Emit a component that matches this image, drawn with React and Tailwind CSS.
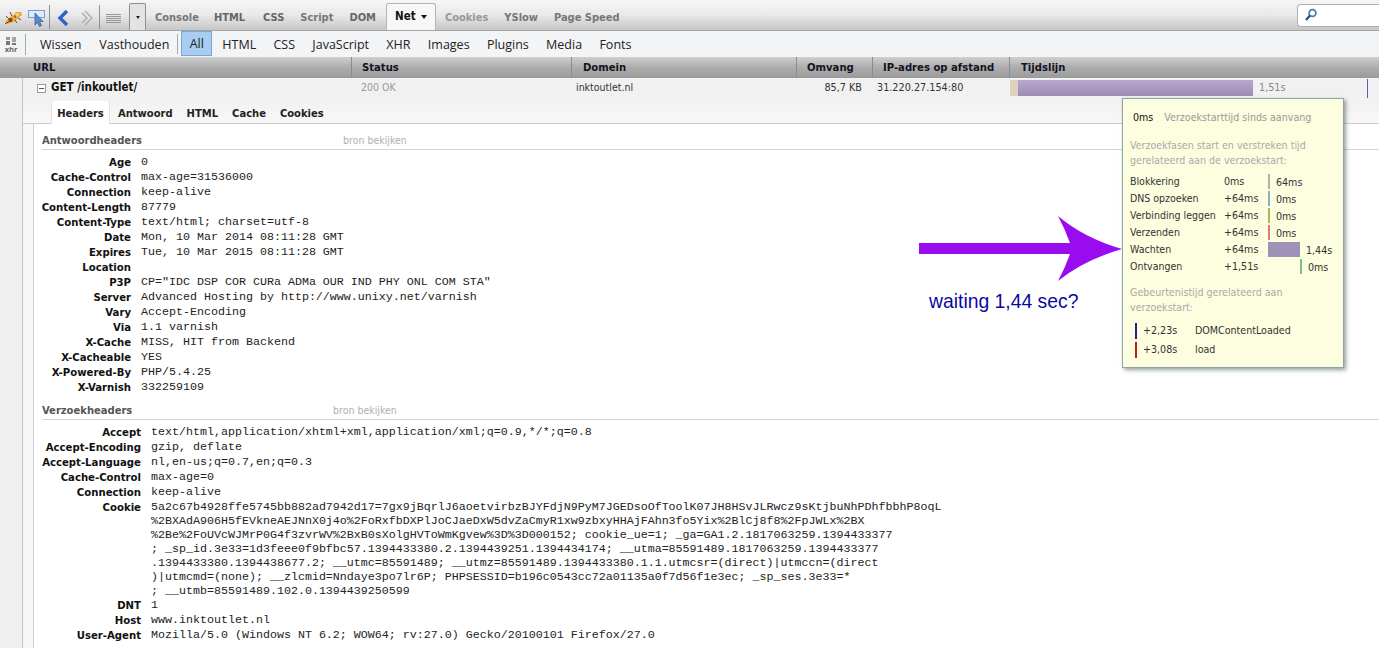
const ui = { fontFamily: '"DejaVu Sans Condensed","DejaVu Sans",sans-serif' };

function Bug() {
  return (
    <svg width="20" height="18" viewBox="0 0 20 18">
      <path d="M2 13 L6 9 L10 6 L13 3 L18 3 L19 6 L15 9 L12 12 L8 14 L4 15 Z" fill="#e9a63c" />
      <path d="M10 6 L14 4 L17 5 L14 8 L11 9 Z" fill="#f6cf78" />
      <path d="M2 15 L7 12 M6 10 L3 7 M9 7 L7 3 M12 11 L14 14 M15 9 L18 11" stroke="#6e4a1c" strokeWidth="1" fill="none" />
      <circle cx="7.5" cy="11" r="2" fill="#7b4316" />
      <circle cx="12" cy="7.5" r="1.3" fill="#a85a1a" />
    </svg>
  );
}

function Inspect() {
  return (
    <svg width="20" height="18" viewBox="0 0 20 18">
      <rect x="1.5" y="1.5" width="16" height="7" fill="#dfeafa" stroke="#7e9cc8" />
      <path d="M8 4 L8 16 L10.5 13.5 L12.5 17.5 L14.5 16.5 L12.5 12.5 L16 12.5 Z" fill="#5a8ad0" stroke="#3a5f9a" strokeWidth="0.8" />
    </svg>
  );
}

function Search() {
  return (
    <svg width="14" height="14" viewBox="0 0 14 14" fill="none">
      <circle cx="8.5" cy="5" r="3.4" stroke="#4d7fa8" strokeWidth="1.8" />
      <path d="M6 7.5 L2 12" stroke="#234f78" strokeWidth="2.2" />
    </svg>
  );
}

function Xhr() {
  return (
    <svg width="12" height="8" viewBox="0 0 12 8">
      <rect x="1" y="0" width="4" height="3" fill="#9a9a9a" />
      <rect x="1" y="4" width="4" height="4" fill="#777" />
      <rect x="7" y="0" width="4" height="5" fill="#a5a5a5" />
      <rect x="7" y="6" width="4" height="2" fill="#777" />
    </svg>
  );
}

const topTabs = [
  ['Console', 'ml-[9px] text-[#777]'],
  ['HTML', 'ml-[15px] text-[#666]'],
  ['CSS', 'ml-[18px] text-[#666]'],
  ['Script', 'ml-[16px] text-[#777]'],
  ['DOM', 'ml-[16px] text-[#666]'],
];

function TopBar() {
  return (
    <div className="flex h-[31px] items-center border-b border-[#a5a5a5] bg-gradient-to-b from-[#f6f6f6] via-[#e9e9e9] to-[#c6c6c6] pt-[6px]" style={ui}>
      <div className="ml-[3px] flex w-[20px] justify-center"><Bug /></div>
      <div className="ml-[4px] flex w-[20px] justify-center"><Inspect /></div>
      <div className="ml-[2px] h-[24px] w-px -translate-y-px bg-[#8f8f8f]" />
      <svg width="14" height="16" viewBox="0 0 14 16" className="ml-[7px]"><path d="M10 1 L3 8 L10 15" fill="none" stroke="#2a62c8" strokeWidth="3.4" /></svg>
      <svg width="14" height="16" viewBox="0 0 14 16" className="ml-[9px]"><path d="M5 1 L12 8 L5 15 M2 3 L7 8 L2 13" fill="none" stroke="#a8a8a8" strokeWidth="1.2" /></svg>
      <div className="ml-[5px] h-[24px] w-px -translate-y-px bg-[#8f8f8f]" />
      <div className="ml-[6px] flex w-[15px] flex-col gap-[1px]">
        <div className="h-px bg-[#999]" /><div className="h-px bg-[#999]" /><div className="h-px bg-[#999]" /><div className="h-px bg-[#999]" /><div className="h-px bg-[#999]" />
      </div>
      <div className="ml-[8px] flex h-[27px] w-[17px] items-center justify-center self-end rounded-t-[2px] border border-b-0 border-[#8f8f8f] bg-[#e3e3e3]">
        <div className="h-0 w-0 border-x-[2px] border-t-[3px] border-x-transparent border-t-[#222]" />
      </div>
      {topTabs.map(([t, c]) => (
        <span key={t} className={`text-[11px] font-bold ${c}`}>{t}</span>
      ))}
      <div className="ml-[10px] flex h-[27px] w-[50px] items-center justify-center gap-[5px] self-end rounded-t-[3px] border border-b-0 border-[#b5b5b5] bg-[#f7f7f7] text-[11.5px] font-bold text-[#111]">
        Net
        <div className="h-0 w-0 border-x-[3.5px] border-t-[4px] border-x-transparent border-t-[#111]" />
      </div>
      <span className="ml-[9px] text-[11px] font-bold text-[#999]">Cookies</span>
      <span className="ml-[16px] text-[11px] font-bold text-[#777]">YSlow</span>
      <span className="ml-[16px] text-[11px] font-bold text-[#777]">Page Speed</span>
      <div className="ml-auto flex h-[23px] w-[82px] -translate-y-[3px] items-center rounded-l-[4px] border border-r-0 border-[#a9b1b9] bg-white pl-[6px]">
        <Search />
      </div>
    </div>
  );
}

function FilterBar() {
  const items = ['HTML', 'CSS', 'JavaScript', 'XHR', 'Images', 'Plugins', 'Media', 'Fonts'];
  return (
    <div className="flex h-[26px] items-center bg-[#f3f4f6] text-[12.5px] text-[#222]" style={{ fontFamily: '"Open Sans",sans-serif' }}>
      <div className="ml-[5px] flex w-[12px] flex-col items-center text-[7.5px] font-bold leading-[6px] text-[#666]"><Xhr /><span className="mt-[1px]">xhr</span></div>
      <div className="ml-[8px] h-[21px] w-px bg-[#aaa]" />
      <span className="ml-[14px] pt-[2px]">Wissen</span>
      <span className="ml-[18px] pt-[2px]">Vasthouden</span>
      <div className="ml-[8px] h-[20px] w-px bg-[#aaa]" />
      <div className="ml-[3px] flex h-[25px] w-[31px] items-center justify-center self-start border border-[#7ba6d3] bg-[#a9cdf0] pt-[2px]">All</div>
      {items.map((t, i) => (
        <span key={t} className={i === 0 ? 'ml-[10px] pt-[2px]' : 'ml-[17.3px] pt-[2px]'}>{t}</span>
      ))}
    </div>
  );
}

const cols = [
  ['URL', 'w-[351px] pl-[33px]'],
  ['Status', 'w-[220px] pl-[10px] border-l border-[#8c8c8c]'],
  ['Domein', 'w-[225px] pl-[11px] border-l border-[#8c8c8c]'],
  ['Omvang', 'w-[76px] pl-[10px] border-l border-[#8c8c8c]'],
  ['IP-adres op afstand', 'w-[137px] pl-[10px] border-l border-[#8c8c8c]'],
  ['Tijdslijn', 'flex-1 pl-[11px] border-l border-[#8c8c8c]'],
];

function ColHead() {
  return (
    <div className="flex h-[21px] bg-gradient-to-b from-[#cfcfcf] via-[#adadad] to-[#9a9a9a] text-[11.2px] font-bold leading-[21px] text-[#14141e]" style={ui}>
      {cols.map(([t, c]) => <div key={t} className={c}>{t}</div>)}
    </div>
  );
}

function ReqRow() {
  return (
    <div className="flex h-[20px] items-center bg-[#f1f1f1] text-[10.75px] text-[#333]" style={ui}>
      <div className="flex w-[328px] items-center">
        <div className="ml-[14px] flex h-[9px] w-[9px] items-center justify-center border border-[#999] bg-white"><div className="h-px w-[5px] bg-[#555]" /></div>
        <span className="ml-[5px] text-[11.5px] font-bold text-[#111]">GET /inkoutlet/</span>
      </div>
      <div className="w-[220px] pl-[10px] text-[10.5px] text-[#999]">200 OK</div>
      <div className="w-[225px] pl-[5px] text-[10.5px]">inktoutlet.nl</div>
      <div className="w-[66px] text-right">85,7 KB</div>
      <div className="w-[147px] pl-[15px] whitespace-nowrap">31.220.27.154:80</div>
      <div className="flex h-[16px] items-center">
        <div className="ml-[1px] h-full w-[8px] bg-[#dcd2bf]" />
        <div className="h-full w-[235px] bg-gradient-to-b from-[#b9a9cf] to-[#9c8cb4]" />
        <span className="ml-[6px] text-[#888]">1,51s</span>
      </div>
      <div className="ml-auto mr-[11px] h-[19px] w-px bg-[#5b5bb5]" />
    </div>
  );
}

function SubTabs() {
  const tabs = [['Antwoord', 'ml-[8px]'], ['HTML', 'ml-[14px]'], ['Cache', 'ml-[14px]'], ['Cookies', 'ml-[14px]']];
  return (
    <div className="flex h-[26px] items-end border-b border-[#ccc] bg-gradient-to-b from-[#f1f1f1] to-[#f8f8f8] pl-[28px] text-[11.1px] font-bold text-[#222]" style={ui}>
      <div className="-mb-px flex h-[23px] w-[59px] items-center justify-center rounded-t-[3px] border-x border-[#e3e3e3] bg-white pt-[4px]">Headers</div>
      {tabs.map(([t, c]) => <span key={t} className={`${c} h-[18px] leading-[18px]`}>{t}</span>)}
    </div>
  );
}

function SectionTitle({ title, w, mt }) {
  return (
    <div className={`${mt} flex h-[19px] items-center border-b border-[#d5d5d5] pt-[2px] text-[10.5px]`} style={ui}>
      <span className={`${w} text-[11.1px] font-bold text-[#555]`}>{title}</span>
      <span className="font-normal text-[#b0b0b0]">bron bekijken</span>
    </div>
  );
}

const mono = { fontFamily: '"Liberation Mono",monospace' };

function HeaderRow({ k, v, w, tall }) {
  return (
    <div className="flex">
      <div className={`${w} shrink-0 text-right text-[11.25px] font-bold leading-[15px] text-[#111]`} style={ui}>{k}</div>
      <div className={`ml-[10px] whitespace-pre text-[11.67px] text-[#222] ${tall ? 'leading-[14px]' : 'leading-[15px]'}`} style={mono}>{v}</div>
    </div>
  );
}

const respHeaders = [
  ['Age', '0'],
  ['Cache-Control', 'max-age=31536000'],
  ['Connection', 'keep-alive'],
  ['Content-Length', '87779'],
  ['Content-Type', 'text/html; charset=utf-8'],
  ['Date', 'Mon, 10 Mar 2014 08:11:28 GMT'],
  ['Expires', 'Tue, 10 Mar 2015 08:11:28 GMT'],
  ['Location', ' '],
  ['P3P', 'CP="IDC DSP COR CURa ADMa OUR IND PHY ONL COM STA"'],
  ['Server', 'Advanced Hosting by http://www.unixy.net/varnish'],
  ['Vary', 'Accept-Encoding'],
  ['Via', '1.1 varnish'],
  ['X-Cache', 'MISS, HIT from Backend'],
  ['X-Cacheable', 'YES'],
  ['X-Powered-By', 'PHP/5.4.25'],
  ['X-Varnish', '332259109'],
];

const cookie = `5a2c67b4928ffe5745bb882ad7942d17=7gx9jBqrlJ6aoetvirbzBJYFdjN9PyM7JGEDsoOfToolK07JH8HSvJLRwcz9sKtjbuNhPDhfbbhP8oqL
%2BXAdA906H5fEVkneAEJNnX0j4o%2FoRxfbDXPlJoCJaeDxW5dvZaCmyR1xw9zbxyHHAjFAhn3fo5Yix%2BlCj8f8%2FpJWLx%2BX
%2Be%2FoUVcWJMrP0G4f3zvrWV%2BxB0sXolgHVToWmKgvew%3D%3D000152; cookie_ue=1; _ga=GA1.2.1817063259.1394433377
; _sp_id.3e33=1d3feee0f9bfbc57.1394433380.2.1394439251.1394434174; __utma=85591489.1817063259.1394433377
.1394433380.1394438677.2; __utmc=85591489; __utmz=85591489.1394433380.1.1.utmcsr=(direct)|utmccn=(direct
)|utmcmd=(none); __zlcmid=Nndaye3po7lr6P; PHPSESSID=b196c0543cc72a01135a0f7d56f1e3ec; _sp_ses.3e33=*
; __utmb=85591489.102.0.1394439250599`;

const reqHeaders = [
  ['Accept', 'text/html,application/xhtml+xml,application/xml;q=0.9,*/*;q=0.8'],
  ['Accept-Encoding', 'gzip, deflate'],
  ['Accept-Language', 'nl,en-us;q=0.7,en;q=0.3'],
  ['Cache-Control', 'max-age=0'],
  ['Connection', 'keep-alive'],
  ['Cookie', cookie, true],
  ['DNT', '1'],
  ['Host', 'www.inktoutlet.nl'],
  ['User-Agent', 'Mozilla/5.0 (Windows NT 6.2; WOW64; rv:27.0) Gecko/20100101 Firefox/27.0'],
];

function Body() {
  return (
    <div className="flex flex-1 overflow-hidden bg-white">
      <div className="w-[11px] shrink-0 border-r border-[#d0d0d0] bg-[#f7f7f7]" />
      <div className="flex-1 pl-[8px]">
        <SectionTitle title="Antwoordheaders" w="w-[301px]" mt="mt-[7px]" />
        <div className="mt-[5px] -ml-[2px]">
          {respHeaders.map(([k, v]) => <HeaderRow key={k} k={k} v={v} w="w-[91px]" />)}
        </div>
        <SectionTitle title="Verzoekheaders" w="w-[291px]" mt="mt-[6px]" />
        <div className="mt-[5px] -ml-[2px]">
          {reqHeaders.map(([k, v, t]) => <HeaderRow key={k} k={k} v={v} tall={t} w="w-[101px]" />)}
        </div>
      </div>
    </div>
  );
}

const phases = [
  ['Blokkering', '0ms', 0, 2, '#b5b0a0', '64ms'],
  ['DNS opzoeken', '+64ms', 0, 2, '#7fb3c0', '0ms'],
  ['Verbinding leggen', '+64ms', 0, 2, '#a5b860', '0ms'],
  ['Verzenden', '+64ms', 0, 2, '#dc7a7a', '0ms'],
  ['Wachten', '+64ms', 0, 32, '#9f92b8', '1,44s'],
  ['Ontvangen', '+1,51s', 32, 2, '#78c088', '0ms'],
];

function Tooltip() {
  return (
    <div className="absolute left-[1122px] top-[98px] h-[270px] w-[222px] border border-[#8fa5a5] bg-[#fdfddf] pl-[7px] text-[10.6px] text-[#333] shadow-[2px_2px_4px_rgba(60,80,90,0.55)]" style={ui}>
      <div className="mt-[11px] flex h-[15px] items-center">
        <span className="ml-[3px] text-[#111]">0ms</span>
        <span className="ml-[11px] text-[#999]">Verzoekstarttijd sinds aanvang</span>
      </div>
      <div className="mt-[13px] leading-[15px] text-[#aaa]">
        Verzoekfasen start en verstreken tijd<br />gerelateerd aan de verzoekstart:
      </div>
      <div className="mt-[5px]">
        {phases.map(([a, b, off, w, col, t]) => (
          <div key={a} className="flex h-[17px] items-center">
            <div className="w-[94px] shrink-0 text-[10.5px]">{a}</div>
            <div className="w-[44px] shrink-0">{b}</div>
            <div className="flex items-center">
              {off > 0 && <div className="w-[32px]" />}
              <div className="h-[15px]" style={{ width: w, backgroundColor: col }} />
              <span className="ml-[6px] mt-[2px] text-[#333]">{t}</span>
            </div>
          </div>
        ))}
      </div>
      <div className="mt-[10px] leading-[15px] text-[#aaa]">
        Gebeurtenistijd gerelateerd aan<br />verzoekstart:
      </div>
      <div className="mt-[6px] flex h-[19px] items-center">
        <div className="ml-[5px] h-[16px] w-[2px] bg-[#24248c]" />
        <span className="ml-[6px] w-[52px]">+2,23s</span>
        <span>DOMContentLoaded</span>
      </div>
      <div className="flex h-[19px] items-center">
        <div className="ml-[5px] h-[16px] w-[2px] bg-[#b82020]" />
        <span className="ml-[6px] w-[52px]">+3,08s</span>
        <span>load</span>
      </div>
    </div>
  );
}

function Arrow() {
  return (
    <svg className="absolute left-[919px] top-[216px]" width="204" height="66" viewBox="0 0 204 66">
      <path d="M0 27 H151 Q146 13 139 0 Q165 22 203 33 Q165 44 139 65 Q146 52 151 38 H0 Z" fill="#9a0cf0" />
    </svg>
  );
}

export default function App() {
  return (
    <div className="relative flex h-[648px] w-[1379px] flex-col overflow-hidden bg-white">
      <TopBar />
      <FilterBar />
      <ColHead />
      <div className="flex min-h-0 flex-1">
        <div className="w-[23px] shrink-0 border-r border-[#c4c4c4] bg-[#f0f0f0]" />
        <div className="flex min-w-0 flex-1 flex-col">
          <ReqRow />
          <SubTabs />
          <Body />
        </div>
      </div>
      <Arrow />
      <div className="absolute left-[929px] top-[288px] whitespace-nowrap text-[19.35px] leading-[26px] text-[#0a0a9e]" style={{ fontFamily: '"Liberation Sans",sans-serif' }}>waiting 1,44 sec?</div>
      <Tooltip />
    </div>
  );
}
